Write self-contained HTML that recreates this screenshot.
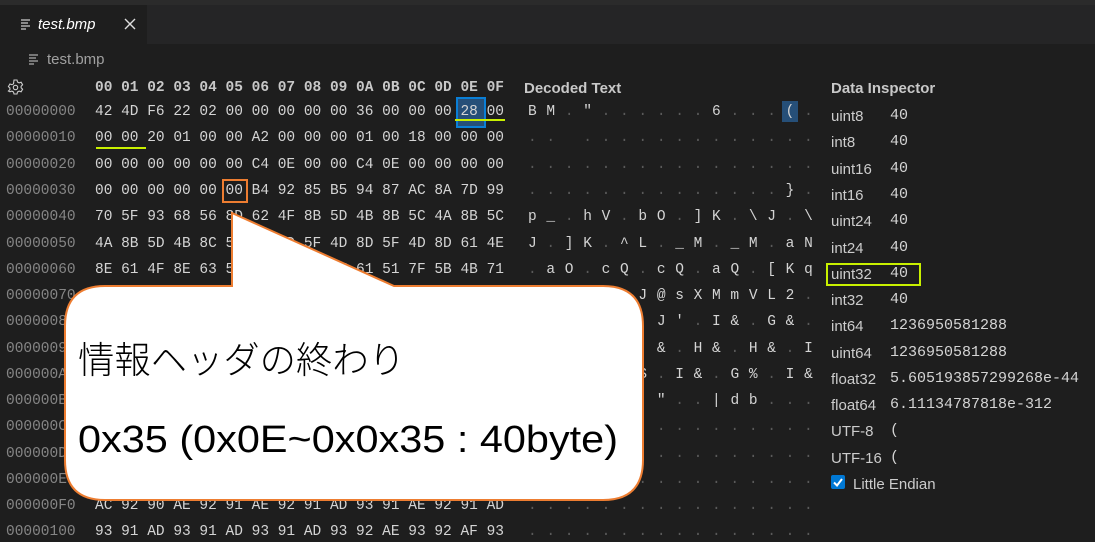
<!DOCTYPE html>
<html><head><meta charset="utf-8"><style>
*{margin:0;padding:0;box-sizing:border-box}
body{width:1095px;height:542px;background:#1e1e1e;overflow:hidden;position:relative;font-family:"Liberation Sans",sans-serif;color:#ccc}
.top{position:absolute;left:0;top:0;width:1095px;height:5px;background:#2b2b2b}
.tabbar{position:absolute;left:0;top:5px;width:1095px;height:39px;background:#252526}
.tab{position:absolute;left:0;top:5px;width:147px;height:39px;background:#1e1e1e}
.m{font-family:"Liberation Mono",monospace;white-space:pre;position:absolute;font-size:14.5px;line-height:20px;margin-top:1px}
.off{left:6px;color:#858585}
.hex{left:95px;color:#d4d4d4}
.dec{left:528px;color:#d4d4d4;letter-spacing:0.5px}
.dec i{font-style:normal;color:#5a5a5a}
.lab{position:absolute;left:831px;font-size:15px;color:#cccccc;margin-top:2px}
.val{position:absolute;left:890px;font-family:"Liberation Mono",monospace;font-size:15px;color:#d4d4d4;margin-top:2px}
</style></head><body>
<div class="top"></div><div class="tabbar"></div>
<div class="tab">
<svg style="position:absolute;left:20px;top:13px" width="12" height="12"><path d="M1 2h9M1 5h7M1 8h9M1 11h5" stroke="#ccc" stroke-width="1.2"/></svg>
<div style="position:absolute;left:38px;top:11px;font-size:15px;font-style:italic;color:#fff">test.bmp</div>
<svg style="position:absolute;left:124px;top:13px" width="12" height="12"><path d="M1 1L11 11M11 1L1 11" stroke="#ddd" stroke-width="1.4"/></svg>
</div>
<svg style="position:absolute;left:28px;top:53px" width="12" height="12"><path d="M1 2h9M1 5h7M1 8h9M1 11h5" stroke="#aaa" stroke-width="1.2"/></svg>
<div style="position:absolute;left:47px;top:51px;font-size:15px;color:#a0a0a0">test.bmp</div>
<svg style="position:absolute;left:7px;top:79px" width="17" height="17" viewBox="0 0 17 17"><path d="M7 1h3l.5 2 1.6 .9 2-.7 1.5 2.6-1.5 1.4v1.6l1.5 1.4-1.5 2.6-2-.7-1.6.9-.5 2h-3l-.5-2-1.6-.9-2 .7L1.4 12l1.5-1.4V9L1.4 7.6 2.9 5l2 .7L6.5 4.8z" fill="none" stroke="#ccc" stroke-width="1.1"/><circle cx="8.5" cy="8.5" r="2.2" fill="none" stroke="#ccc" stroke-width="1.1"/></svg>

<div style="position:absolute;left:456px;top:97px;width:30px;height:31px;background:#264f78;border:2px solid #0a7fd6"></div>
<div style="position:absolute;left:782px;top:101px;width:16px;height:21px;background:#264f78"></div>

<div class="m hex" style="top:77px;font-weight:bold;color:#c8c8c8">00 01 02 03 04 05 06 07 08 09 0A 0B 0C 0D 0E 0F</div>
<div style="position:absolute;left:524px;top:80px;font-size:15px;font-weight:bold;color:#c8c8c8">Decoded Text</div>
<div style="position:absolute;left:831px;top:80px;font-size:15px;font-weight:bold;color:#c8c8c8">Data Inspector</div>

<div class="m off" style="top:101px">00000000</div><div class="m hex" style="top:101px">42 4D F6 22 02 00 00 00 00 00 36 00 00 00 28 00</div>
<div class="m off" style="top:127px">00000010</div><div class="m hex" style="top:127px">00 00 20 01 00 00 A2 00 00 00 01 00 18 00 00 00</div>
<div class="m off" style="top:154px">00000020</div><div class="m hex" style="top:154px">00 00 00 00 00 00 C4 0E 00 00 C4 0E 00 00 00 00</div>
<div class="m off" style="top:180px">00000030</div><div class="m hex" style="top:180px">00 00 00 00 00 00 B4 92 85 B5 94 87 AC 8A 7D 99</div>
<div class="m off" style="top:206px">00000040</div><div class="m hex" style="top:206px">70 5F 93 68 56 8D 62 4F 8B 5D 4B 8B 5C 4A 8B 5C</div>
<div class="m off" style="top:233px">00000050</div><div class="m hex" style="top:233px">4A 8B 5D 4B 8C 5E 4C 8D 5F 4D 8D 5F 4D 8D 61 4E</div>
<div class="m off" style="top:259px">00000060</div><div class="m hex" style="top:259px">8E 61 4F 8E 63 51 8E 63 51 8E 61 51 7F 5B 4B 71</div>
<div class="m off" style="top:285px">00000070</div>
<div class="m off" style="top:311px">00000080</div>
<div class="m off" style="top:338px">00000090</div>
<div class="m off" style="top:364px">000000A0</div>
<div class="m off" style="top:390px">000000B0</div>
<div class="m off" style="top:416px">000000C0</div>
<div class="m off" style="top:443px">000000D0</div>
<div class="m off" style="top:469px">000000E0</div>
<div class="m off" style="top:495px">000000F0</div><div class="m hex" style="top:495px">AC 92 90 AE 92 91 AE 92 91 AD 93 91 AE 92 91 AD</div>
<div class="m off" style="top:521px">00000100</div><div class="m hex" style="top:521px">93 91 AD 93 91 AD 93 91 AD 93 92 AE 93 92 AF 93</div>

<div class="m dec" style="top:101px">B M <i>.</i> " <i>. . . . . .</i> 6 <i>. . .</i> ( <i>.</i></div>
<div class="m dec" style="top:127px"><i>. .</i>   <i>. . . . . . . . . . . . .</i></div>
<div class="m dec" style="top:154px"><i>. . . . . . . . . . . . . . . .</i></div>
<div class="m dec" style="top:180px"><i>. . . . . . . . . . . . . .</i> } <i>.</i></div>
<div class="m dec" style="top:206px">p _ <i>.</i> h V <i>.</i> b O <i>.</i> ] K <i>.</i> \ J <i>.</i> \</div>
<div class="m dec" style="top:233px">J <i>.</i> ] K <i>.</i> ^ L <i>.</i> _ M <i>.</i> _ M <i>.</i> a N</div>
<div class="m dec" style="top:259px"><i>.</i> a O <i>.</i> c Q <i>.</i> c Q <i>.</i> a Q <i>.</i> [ K q</div>
<div class="m dec" style="top:285px"><i>. . . . . .</i> J @ s X M m V L 2 <i>.</i></div>
<div class="m dec" style="top:311px"><i>. . . . . . .</i> J ' <i>.</i> I &amp; <i>.</i> G &amp; <i>.</i></div>
<div class="m dec" style="top:338px"><i>. . . . . . .</i> &amp; <i>.</i> H &amp; <i>.</i> H &amp; <i>.</i> I</div>
<div class="m dec" style="top:364px"><i>. . . . . .</i> S <i>.</i> I &amp; <i>.</i> G % <i>.</i> I &amp;</div>
<div class="m dec" style="top:390px"><i>. . . . . . .</i> " <i>. .</i> | d b <i>. . .</i></div>
<div class="m dec" style="top:416px"><i>. . . . . . . . . . . . . . . .</i></div>
<div class="m dec" style="top:443px"><i>. . . . . . . . . . . . . . . .</i></div>
<div class="m dec" style="top:469px"><i>. . . . . . . . . . . . . . . .</i></div>
<div class="m dec" style="top:495px"><i>. . . . . . . . . . . . . . . .</i></div>
<div class="m dec" style="top:521px"><i>. . . . . . . . . . . . . . . .</i></div>

<div style="position:absolute;left:455px;top:119px;width:50px;height:2px;background:#c8f000"></div>
<div style="position:absolute;left:96px;top:147px;width:50px;height:2px;background:#c8f000"></div>
<div style="position:absolute;left:222px;top:179px;width:26px;height:24px;border:2px solid #ed7d31"></div>
<div style="position:absolute;left:826px;top:263px;width:95px;height:23px;border:2px solid #c8f000"></div>

<div class="lab" style="top:106px">uint8</div><div class="val" style="top:105px">40</div>
<div class="lab" style="top:132px">int8</div><div class="val" style="top:131px">40</div>
<div class="lab" style="top:159px">uint16</div><div class="val" style="top:158px">40</div>
<div class="lab" style="top:185px">int16</div><div class="val" style="top:184px">40</div>
<div class="lab" style="top:211px">uint24</div><div class="val" style="top:210px">40</div>
<div class="lab" style="top:238px">int24</div><div class="val" style="top:237px">40</div>
<div class="lab" style="top:264px">uint32</div><div class="val" style="top:263px">40</div>
<div class="lab" style="top:290px">int32</div><div class="val" style="top:289px">40</div>
<div class="lab" style="top:316px">int64</div><div class="val" style="top:315px">1236950581288</div>
<div class="lab" style="top:343px">uint64</div><div class="val" style="top:342px">1236950581288</div>
<div class="lab" style="top:369px">float32</div><div class="val" style="top:368px">5.605193857299268e-44</div>
<div class="lab" style="top:395px">float64</div><div class="val" style="top:394px">6.11134787818e-312</div>
<div class="lab" style="top:421px">UTF-8</div><div class="val" style="top:420px">(</div>
<div class="lab" style="top:448px">UTF-16</div><div class="val" style="top:447px">(</div>
<div style="position:absolute;left:831px;top:475px;width:14px;height:14px;background:#0078d4;border-radius:2px"></div>
<svg style="position:absolute;left:831px;top:475px" width="14" height="14"><path d="M3 7.5l3 3 5-6.5" stroke="#fff" stroke-width="2" fill="none"/></svg>
<div class="lab" style="left:853px;top:474px">Little Endian</div>

<svg style="position:absolute;left:0;top:0" width="1095" height="542">
<path d="M105 286 H232 V213 L394 286 H603 Q643 286 643 326 V460 Q643 500 603 500 H105 Q65 500 65 460 V326 Q65 286 105 286 Z" fill="#fff" stroke="#ed7d31" stroke-width="2"/>
<text x="78" y="373" font-family="Noto Sans CJK JP, sans-serif" font-weight="300" font-size="37" fill="#000" textLength="327" lengthAdjust="spacingAndGlyphs">情報ヘッダの終わり</text>
<text x="78" y="452" font-family="Liberation Sans, sans-serif" font-size="38" fill="#000" textLength="540" lengthAdjust="spacingAndGlyphs">0x35 (0x0E~0x0x35 : 40byte)</text>
</svg>
</body></html>
